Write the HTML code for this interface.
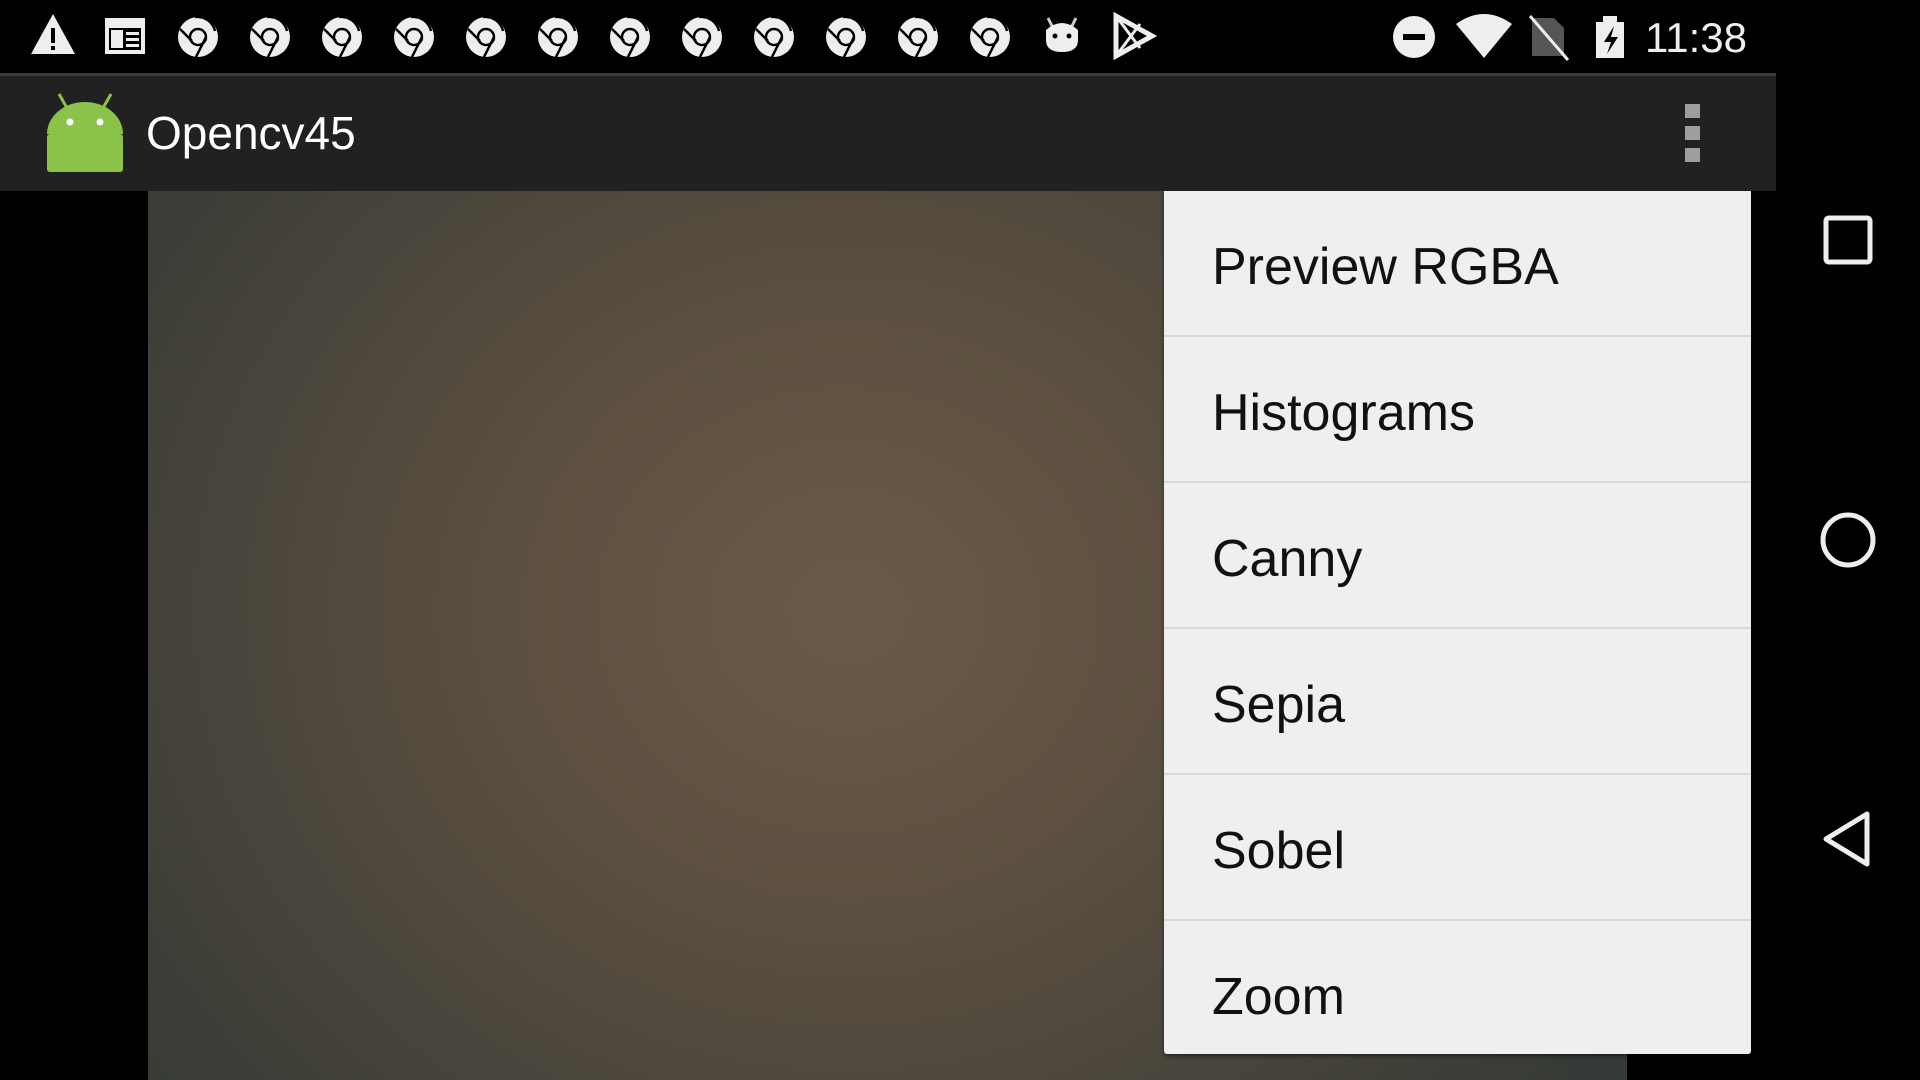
<!DOCTYPE html>
<html><head><meta charset="utf-8"><style>
*{margin:0;padding:0;box-sizing:border-box}
body{width:1920px;height:1080px;background:#000;position:relative;overflow:hidden;font-family:"Liberation Sans",sans-serif}
.abs{position:absolute}
#cam{left:148px;top:191px;width:1479px;height:889px;background:radial-gradient(ellipse 900px 800px at 700px 420px,#6a5948 0%,#5e5141 35%,#4b463c 65%,#363a36 100%)}
#bar{left:0;top:73px;width:1776px;height:118px;background:#212121;border-top:3px solid #3a3a3a}
#menu{left:1164px;top:191px;width:587px;height:863px;background:#efefef;border-radius:0 0 3px 3px;box-shadow:0 2px 4px rgba(0,0,0,.5)}
.it{height:146px;border-bottom:2px solid #d8d8d8;font-size:52px;color:#111;padding-left:48px;line-height:152px}
.it:last-child{border-bottom:none}
</style></head><body>
<div id="cam" class="abs"></div>
<div id="bar" class="abs">
 <svg class="abs" style="left:45px;top:16px" width="80" height="82" viewBox="0 0 80 82">
  <line x1="14" y1="2" x2="22" y2="16" stroke="#8bc34a" stroke-width="3"/>
  <line x1="66" y1="2" x2="58" y2="16" stroke="#8bc34a" stroke-width="3"/>
  <path d="M2 42 A38 32 0 0 1 78 42 Z" fill="#8bc34a"/>
  <rect x="2" y="42" width="76" height="38" rx="3" fill="#8bc34a"/>
  <circle cx="25" cy="30" r="3.5" fill="#fff"/><circle cx="55" cy="30" r="3.5" fill="#fff"/>
 </svg>
 <div class="abs" style="left:146px;top:30px;font-size:46px;color:#fff">Opencv45</div>
 <div class="abs" style="left:1685px;top:28px;width:15px;height:58px;background:linear-gradient(#9e9e9e 0 14px,transparent 14px 22px,#9e9e9e 22px 36px,transparent 36px 44px,#9e9e9e 44px)"></div>
</div>
<div id="menu" class="abs">
 <div class="it">Preview RGBA</div><div class="it">Histograms</div><div class="it">Canny</div><div class="it">Sepia</div><div class="it">Sobel</div><div class="it">Zoom</div>
</div>
<svg class="abs" style="left:0;top:0" width="1920" height="73">
 <path d="M53 14 L75 54 L31 54 Z" fill="#eee"/><rect x="51" y="28" width="4" height="15" fill="#000"/><rect x="51" y="46" width="4" height="4" fill="#000"/>
 <rect x="105" y="18" width="40" height="36" fill="#eee"/><rect x="109" y="28" width="32" height="22" fill="#000"/><rect x="111" y="30" width="12" height="18" fill="#eee"/><rect x="126" y="32" width="13" height="3" fill="#eee"/><rect x="126" y="38" width="13" height="3" fill="#eee"/><rect x="126" y="44" width="13" height="3" fill="#eee"/>
 <path d="M1048 18 l4 8 M1076 18 l-4 8" stroke="#ccc" stroke-width="3"/>
 <path d="M1046 30 q16-14 32 0 v10 q0 12-16 12 q-16 0-16-12Z" fill="#eee"/><circle cx="1055" cy="36" r="2.5" fill="#000"/><circle cx="1069" cy="36" r="2.5" fill="#000"/>
 <path d="M1116 16 L1152 36 L1116 56 Z" fill="none" stroke="#eee" stroke-width="5"/><path d="M1116 16 L1140 48 M1116 56 L1140 24" stroke="#eee" stroke-width="3"/>
 <circle cx="1414" cy="37" r="21" fill="#eee"/><rect x="1403" y="34" width="22" height="6" fill="#000"/>
 <path d="M1456 24 q28-20 56 0 L1484 58 Z" fill="#eee"/>
 <path d="M1532 18 h22 l10 10 v28 h-32Z" fill="#555"/><line x1="1530" y1="16" x2="1568" y2="60" stroke="#eee" stroke-width="3"/>
 <rect x="1596" y="22" width="28" height="36" fill="#eee"/><rect x="1603" y="16" width="14" height="7" fill="#eee"/><path d="M1614 26 l-10 16 h7 l-4 12 l11-17 h-7z" fill="#000"/>
 <text x="1645" y="52" font-family="Liberation Sans" font-size="42" fill="#eee">11:38</text>
 <defs><g id="c"><circle r="20" fill="#eee"/><circle r="8" fill="none" stroke="#000" stroke-width="2.5"/><path d="M-3 -20 A18 18 0 0 1 17 -6 M8 0 L-2 20 M-18 -8 L-6 4" stroke="#000" stroke-width="2.5" fill="none"/></g></defs>
 <use href="#c" x="198" y="37"/><use href="#c" x="270" y="37"/><use href="#c" x="342" y="37"/><use href="#c" x="414" y="37"/><use href="#c" x="486" y="37"/><use href="#c" x="558" y="37"/><use href="#c" x="630" y="37"/><use href="#c" x="702" y="37"/><use href="#c" x="774" y="37"/><use href="#c" x="846" y="37"/><use href="#c" x="918" y="37"/><use href="#c" x="990" y="37"/>
</svg>
<svg class="abs" style="left:1776px;top:191px" width="144" height="889">
 <rect x="50" y="27" width="44" height="44" rx="3" fill="none" stroke="#eee" stroke-width="5"/>
 <circle cx="72" cy="349" r="25" fill="none" stroke="#eee" stroke-width="5"/>
 <path d="M91 623 L91 673 L50 648 Z" fill="none" stroke="#eee" stroke-width="5" stroke-linejoin="round"/>
</svg>
</body></html>
